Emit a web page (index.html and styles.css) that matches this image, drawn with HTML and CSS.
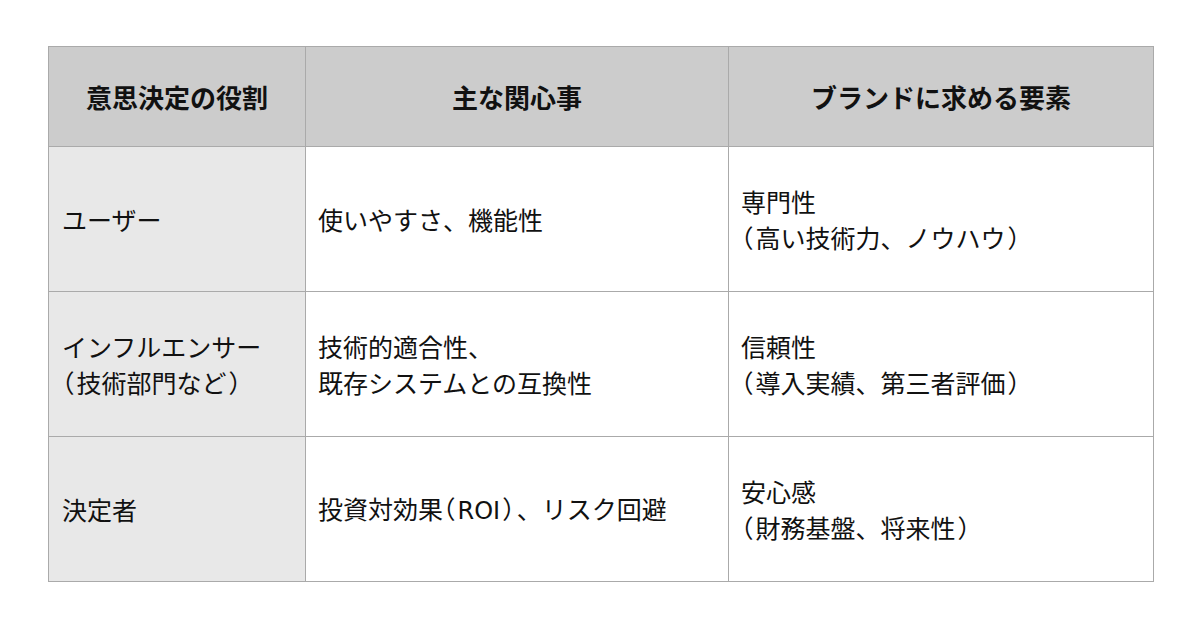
FILE: index.html
```html
<!DOCTYPE html>
<html lang="ja">
<head>
<meta charset="utf-8">
<link rel="stylesheet" href="styles.css">
</head>
<body>
<div class="page">
  <table class="matrix">
    <colgroup>
      <col class="c1"><col class="c2"><col class="c3">
    </colgroup>
    <thead>
      <tr>
        <th>意思決定の役割</th>
        <th>主な関心事</th>
        <th>ブランドに求める要素</th>
      </tr>
    </thead>
    <tbody>
      <tr>
        <td class="role">ユーザー</td>
        <td>使いやすさ、機能性</td>
        <td>専門性<br><span class="p po">（</span>高い技術力、ノウハウ<span class="p pc">）</span></td>
      </tr>
      <tr>
        <td class="role">インフルエンサー<br><span class="p po">（</span>技術部門など<span class="p pc">）</span></td>
        <td>技術的適合性、<br>既存システムとの互換性</td>
        <td>信頼性<br><span class="p po">（</span>導入実績、第三者評価<span class="p pc">）</span></td>
      </tr>
      <tr>
        <td class="role">決定者</td>
        <td>投資対効果<span class="p po">（</span><span class="latin">ROI</span><span class="p pc">）</span>、リスク回避</td>
        <td>安心感<br><span class="p po">（</span>財務基盤、将来性<span class="p pc">）</span></td>
      </tr>
    </tbody>
  </table>
</div>
</body>
</html>
```

FILE: styles.css
```css
* { box-sizing: border-box; }
html, body { margin: 0; padding: 0; background: #ffffff; }
body {
  font-family: "Noto Sans CJK JP", "Noto Sans", sans-serif;
  color: #111111;
}
.page {
  width: 1200px;
  height: 630px;
  padding: 46px 48px;
}
.matrix {
  width: 1105px;
  border-collapse: collapse;
  table-layout: fixed;
}
.c1 { width: 257px; }
.c2 { width: 423px; }
.c3 { width: 425px; }
.matrix th, .matrix td {
  border: 1px solid #aaaaaa;
  vertical-align: middle;
}
.matrix th {
  background: #cccccc;
  height: 100px;
  font-size: 26px;
  font-weight: 700;
  text-align: center;
  padding: 0 12px;
}
.matrix td {
  height: 145px;
  font-size: 25px;
  line-height: 36px;
  text-align: left;
  padding: 0 12px;
  font-weight: 400;
}
.matrix td.role {
  background: #e8e8e8;
  padding-left: 13px;
}
.p {
  font-feature-settings: "halt" 1;
}
.po { margin-right: 2px; }
.pc { margin-left: 2px; margin-right: 2px; }
.latin {
  font-family: "DejaVu Sans", sans-serif;
  font-size: 24px;
}
```
